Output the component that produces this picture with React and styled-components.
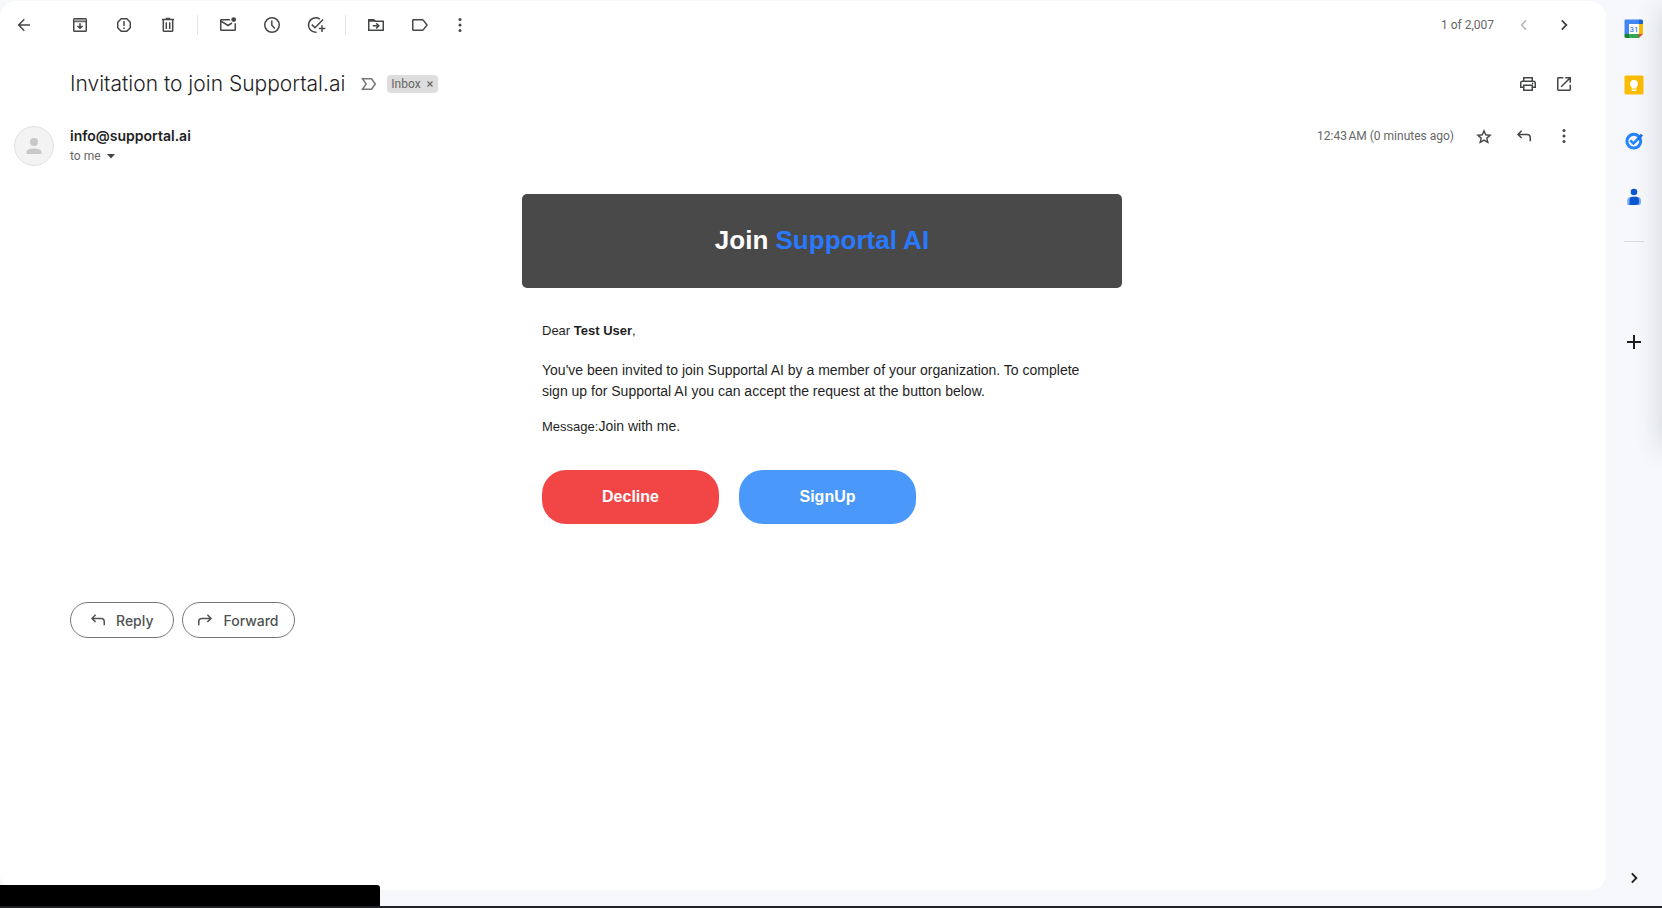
import React, { useState } from 'react'
import styled, { createGlobalStyle } from 'styled-components'

// #region Styles
const GlobalStyle = createGlobalStyle`
  * {
    box-sizing: border-box;
  }

  body {
    margin: 0;
    background-color: #f6f8fc;
    color: #1f1f1f;
    font-family: Roboto, 'Liberation Sans', sans-serif;
  }

  button {
    padding: 0;
    border: none;
    background: none;
    color: inherit;
    font-family: inherit;
    cursor: pointer;
  }
`
const Page = styled.div`
  display: flex;
  min-height: 100vh;
  padding: 1px 0 16px;
  border-bottom: 2px solid #202124;
`
const Main = styled.main`
  flex: 1;
  min-width: 0;
  border-radius: 16px;
  background-color: white;
`
const Toolbar = styled.div`
  display: flex;
  height: 48px;
  padding: 0 32px 0 14px;
  align-items: center;
`
const ToolGroup = styled.div`
  display: flex;
  gap: ${({ $gap }) => $gap || 24}px;
  padding: 0 19px 0 20px;
  border-left: 1px solid ${({ $first }) => ($first ? 'transparent' : '#e3e5e8')};

  > :last-child {
    margin-left: ${({ $last }) => ($last ? '-4px' : 0)};
  }
`
const IconButton = styled.button`
  display: flex;
  flex: none;
  width: 20px;
  height: 20px;
  align-items: center;
  justify-content: center;
  color: ${({ $color }) => $color || '#444746'};

  &:disabled {
    color: #b4b5b5;
    cursor: default;
  }
`
const Glyph = styled.svg`
  display: block;
  flex: none;
  fill: none;
  stroke: currentColor;
  stroke-width: 1.5;
`
const MarkerGlyph = styled(Glyph)`
  color: #777;
`
const BackSlot = styled.div`
  padding-right: 15px;
`
const Pager = styled.div`
  display: flex;
  margin-left: auto;
  align-items: center;
  gap: 20px;
`
const Muted = styled.span`
  color: #666;
  font-size: 12px;
  line-height: 20px;
  white-space: nowrap;
`
const Subject = styled.header`
  display: flex;
  min-height: 36px;
  margin-top: 17px;
  padding: 0 32px 0 70px;
  align-items: center;
`
const Title = styled.h1`
  margin: 0 16px 0 0;
  font-family: Inter, Roboto, sans-serif;
  font-size: 21px;
  font-weight: 300;
  line-height: 28px;
`
const Chip = styled.span`
  display: flex;
  height: 18px;
  margin-left: 10px;
  padding: 0 4px;
  align-items: center;
  gap: 5px;
  border-radius: 4px;
  background-color: #ddd;
  color: #666;
  font-size: 12px;
`
const ChipRemove = styled.button`
  display: flex;
  width: 8px;
  height: 8px;
`
const Actions = styled.div`
  display: flex;
  margin-left: auto;
  align-items: center;
  gap: ${({ $gap }) => $gap}px;
`
const Sender = styled.section`
  display: flex;
  margin-top: 24px;
  padding: 0 32px 0 14px;
  align-items: flex-start;
`
const Avatar = styled.div`
  display: flex;
  width: 40px;
  height: 40px;
  margin-right: 16px;
  align-items: center;
  justify-content: center;
  border: 1px solid #e2e2e2;
  border-radius: 50%;
  background-color: #f3f3f3;
`
const Address = styled.div`
  font-family: Inter, Roboto, sans-serif;
  font-size: 14px;
  font-weight: 600;
  line-height: 20px;
`
const Recipient = styled.button`
  display: flex;
  align-items: center;
  gap: 6px;
`
const LetterWrap = styled.div`
  padding: 0 32px 0 70px;
`
const Letter = styled.article`
  max-width: 600px;
  margin: 28px auto 0;
  font-family: Arial, 'Liberation Sans', sans-serif;
`
const Banner = styled.h2`
  margin: 0;
  padding: 30px 20px 32px;
  border-radius: 5px;
  background-color: #494949;
  color: white;
  font-size: 26px;
  line-height: 32px;
  text-align: center;

  span {
    color: #2979ff;
  }
`
const Body = styled.div`
  padding: 32px 20px 0;
  font-size: 14px;
  line-height: 21px;
`
const Paragraph = styled.p`
  margin: 0 0 ${({ $space }) => $space || 14}px;
`
const Small = styled.span`
  font-size: 13px;
`
const Choices = styled.div`
  display: flex;
  margin-top: 33px;
  gap: 20px;
`
const Choice = styled.button`
  && {
    width: 177px;
    height: 54px;
    border-radius: 24px;
    background-color: ${({ $color }) => $color};
    color: white;
    font-size: 16px;
    font-weight: bold;
  }
`
const Replies = styled.div`
  display: flex;
  margin-top: 78px;
  padding-left: 70px;
  gap: 8px;
`
const Pill = styled.button`
  && {
    display: flex;
    height: 36px;
    padding: 0 ${({ $end }) => $end}px 0 ${({ $start }) => $start}px;
    align-items: center;
    gap: 8px;
    border: 1px solid #747775;
    border-radius: 18px;
    color: #505352;
    font-family: Inter, Roboto, sans-serif;
    font-size: 14px;
    font-weight: 500;
  }
`
const Side = styled.aside`
  display: flex;
  width: 56px;
  padding: 18px 0 2px;
  flex-direction: column;
  align-items: center;
`
const Apps = styled.nav`
  display: flex;
  flex-direction: column;
  gap: 36px;
`
const Rule = styled.hr`
  width: 20px;
  margin: 34px 0 90px;
  border: none;
  border-top: 1px solid #dadce0;
`
const PanelToggle = styled.div`
  margin-top: auto;
`
const EdgeShadow = styled.div`
  position: fixed;
  top: 8px;
  right: -20px;
  width: 20px;
  height: 440px;
  box-shadow: 0 0 28px rgba(60, 64, 67, 0.22);
`
const StatusBubble = styled.div`
  position: fixed;
  bottom: 2px;
  left: 0;
  width: 380px;
  height: 21px;
  border-top-right-radius: 3px;
  background-color: black;
`
// #endregion

const shapes = {
  back: <path d="M16 10H5M10.3 4.3 4.7 10l5.6 5.7" />,
  archive: (
    <>
      <rect x="3.75" y="3.75" width="12.5" height="12.5" rx="0.8" />
      <path d="M4 5h12" stroke="#8a8b8b" />
      <path d="M4 6.7h12" strokeWidth="1" />
      <path d="M10 8.3v4.8M7.5 10.9l2.5 2.4 2.5-2.4" />
    </>
  ),
  spam: (
    <>
      <path d="M7.2 3.75h5.6l3.45 3.45v5.6l-3.45 3.45H7.2L3.75 12.8V7.2z" />
      <path d="M10 6v5M10 12.5V14" />
    </>
  ),
  trash: (
    <path d="M4 4.6h12M7.8 3.6h4.4M5.3 5v10.5q0 .8.8.8h7.8q.8 0 .8-.8V5M8.3 7.3v6.6M11.7 7.3v6.6" />
  ),
  unread: (
    <>
      <path d="M12 4.75H3.3q-.55 0-.55.6v9.3q0 .6.55.6h13.4q.55 0 .55-.6V8.2M3 6.2l7 4.3 4-2.5" />
      <circle cx="15.7" cy="4.6" r="2.4" fill="currentColor" stroke="none" />
    </>
  ),
  snooze: (
    <>
      <circle cx="10" cy="10" r="7.25" />
      <path d="M9.8 5.4v4.9l3.1 3.3" />
    </>
  ),
  task: (
    <path d="M13.8 4.1A7.2 7.2 0 1 0 10.5 17.2M5.8 9.6l3.2 3.1 8.1-8.2M16 10.3v6.6M12.8 13.6h6.5" />
  ),
  move: (
    <>
      <path d="M2.75 15V4.75h5l1.6 1.6h7.9v8.9H2.75zM3 6h5.5" />
      <path d="M6.8 10.8h5.5M10.2 8.2l2.6 2.6-2.6 2.6" />
    </>
  ),
  label: <path d="M3.4 4.75h8.9q.6 0 .95.4L17 10l-3.75 4.85q-.35.4-.95.4H3.4q-.65 0-.65-.65V5.4q0-.65.65-.65z" />,
  more: (
    <g fill="currentColor" stroke="none">
      <circle cx="10" cy="4.6" r="1.5" />
      <circle cx="10" cy="10" r="1.5" />
      <circle cx="10" cy="15.4" r="1.5" />
    </g>
  ),
  prev: <path d="M12.2 5.3 7.6 10l4.6 4.7" />,
  next: <path d="M7.8 5.3l4.6 4.7-4.6 4.7" strokeWidth="1.8" />,
  print: (
    <>
      <path d="M5.75 7V3.75h8.5V7M5.5 13.2H2.75V9q0-1.8 1.8-1.8h10.9q1.8 0 1.8 1.8v4.2H14.5" />
      <path d="M5.75 11.2h8.5v5.05h-8.5z" />
      <circle cx="14.6" cy="9.4" r=".8" fill="currentColor" stroke="none" />
    </>
  ),
  open: <path d="M9.3 3.75H4.4q-.65 0-.65.65v11.2q0 .65.65.65h11.2q.65 0 .65-.65v-4.9M11.3 3.75h4.95v4.9M16 4l-8.8 8.8" />,
  star: (
    <path
      d="m10 4.8 1.7 4 4.4.4-3.3 2.9 1 4.3-3.8-2.3-3.8 2.3 1-4.3-3.3-2.9 4.4-.4z"
      strokeWidth="1.4"
    />
  ),
  reply: <path d="M7.6 4.8 4 8.4 7.6 12M4.2 8.4h8.9q3.15 0 3.15 3.15v3.7" />,
  forward: <path d="M12.4 4.8 16 8.4 12.4 12M15.8 8.4H6.9q-3.15 0-3.15 3.15v3.7" />,
  add: <path d="M10 3v14M3 10h14" strokeWidth="2" />
}

const Icon = ({ name }) => (
  <Glyph width="20" height="20" viewBox="0 0 20 20" aria-hidden="true">
    {shapes[name]}
  </Glyph>
)

const Tool = ({ icon, label, ...rest }) => (
  <IconButton type="button" aria-label={label} title={label} {...rest}>
    <Icon name={icon} />
  </IconButton>
)

const CalendarLogo = () => (
  <svg width="20" height="20" viewBox="0 0 20 20" aria-hidden="true">
    <path d="M1.5.5H15V5H5v10H.5V1.5q0-1 1-1z" fill="#4285f4" />
    <path d="M15 .5h2.5q1.5 0 1.5 1.5v3h-4z" fill="#1967d2" />
    <path d="M15 5h4v10h-4z" fill="#fbbc04" />
    <path d="M5 15h10v4H5z" fill="#34a853" />
    <path d="M.5 15H5v4H2Q.5 19 .5 17.5z" fill="#188038" />
    <path d="M15 15h4l-4 4z" fill="#ea4335" />
    <path d="M5 5h10v10H5z" fill="white" />
    <text x="10" y="13" fill="#4285f4" fontSize="8" fontWeight="500" textAnchor="middle">
      31
    </text>
  </svg>
)

const KeepLogo = () => (
  <svg width="20" height="20" viewBox="0 0 20 20" aria-hidden="true">
    <rect x=".5" y=".5" width="19" height="19" rx="1.5" fill="#fbbc04" />
    <path d="M10 4.7a4.1 4.1 0 0 0-2.5 7.3v1.5h5V12A4.1 4.1 0 0 0 10 4.7zM7.7 14.5h4.6V16H7.7z" fill="white" />
  </svg>
)

const TasksLogo = () => (
  <svg width="20" height="20" viewBox="0 0 20 20" fill="none" aria-hidden="true">
    <circle cx="9.8" cy="10.2" r="6.9" stroke="#2684fc" strokeWidth="3" />
    <path d="m6.2 9.3 3.2 3.2 5-5" stroke="#2684fc" strokeWidth="2.6" />
    <path d="m13 7 3.8-4.2 2.2 1.8-4 4.4z" fill="#1a73e8" />
  </svg>
)

const ContactsLogo = () => (
  <svg width="20" height="20" viewBox="0 0 20 20" aria-hidden="true">
    <circle cx="10" cy="5" r="3.3" fill="#0b57d0" />
    <path d="M3.3 18v-4.3q0-4 4-4h5.2q4.5 0 4.5 4v1.5q0 2.8-3 2.8z" fill="#7baaf7" />
    <path d="M5.5 18v-4.8q0-3.5 3.5-3.5h2.5q3.5 0 3.5 3.5v1.5q0 3.3-3.3 3.3z" fill="#0b57d0" />
  </svg>
)

const apps = [
  { label: 'Calendar', Logo: CalendarLogo },
  { label: 'Keep', Logo: KeepLogo },
  { label: 'Tasks', Logo: TasksLogo },
  { label: 'Contacts', Logo: ContactsLogo }
]

const MailToolbar = () => (
  <Toolbar>
    <BackSlot>
      <Tool icon="back" label="Back to Inbox" />
    </BackSlot>
    <ToolGroup $first>
      <Tool icon="archive" label="Archive" />
      <Tool icon="spam" label="Report spam" />
      <Tool icon="trash" label="Delete" />
    </ToolGroup>
    <ToolGroup>
      <Tool icon="unread" label="Mark as unread" />
      <Tool icon="snooze" label="Snooze" />
      <Tool icon="task" label="Add to Tasks" />
    </ToolGroup>
    <ToolGroup $last>
      <Tool icon="move" label="Move to" />
      <Tool icon="label" label="Labels" />
      <Tool icon="more" label="More" />
    </ToolGroup>
    <Pager>
      <Muted>1 of 2,007</Muted>
      <Tool icon="prev" label="Newer" disabled />
      <Tool icon="next" label="Older" />
    </Pager>
  </Toolbar>
)

const App = () => {
  const [showInbox, setShowInbox] = useState(true)

  return (
    <>
      <GlobalStyle />
      <Page>
        <Main>
          <MailToolbar />

          <Subject>
            <Title>Invitation to join Supportal.ai</Title>
            <MarkerGlyph width="16" height="14" viewBox="0 0 16 14" aria-hidden="true">
              <path d="M1.5 1.75h9L14.3 7l-3.8 5.25h-9L5.2 7z" />
            </MarkerGlyph>
            {showInbox && (
              <Chip>
                Inbox
                <ChipRemove type="button" aria-label="Remove label Inbox" onClick={() => setShowInbox(false)}>
                  <Glyph width="8" height="8" viewBox="0 0 8 8" aria-hidden="true">
                    <path d="m1.5 1.5 5 5M6.5 1.5l-5 5" strokeWidth="1.2" />
                  </Glyph>
                </ChipRemove>
              </Chip>
            )}
            <Actions $gap={16}>
              <Tool icon="print" label="Print all" />
              <Tool icon="open" label="In new window" />
            </Actions>
          </Subject>

          <Sender>
            <Avatar>
              <svg width="16" height="18" viewBox="0 0 16 18" fill="#c8c8c8" aria-hidden="true">
                <circle cx="8" cy="5" r="4" />
                <path d="M.5 17v-2Q.5 11.5 8 11.5t7.5 3.5v2z" />
              </svg>
            </Avatar>
            <div>
              <Address>info@supportal.ai</Address>
              <Recipient type="button" aria-label="Show details">
                <Muted>to me</Muted>
                <svg width="8" height="5" viewBox="0 0 8 5" fill="#444746" aria-hidden="true">
                  <path d="M0 0h8L4 4.5z" />
                </svg>
              </Recipient>
            </div>
            <Actions $gap={20}>
              <Muted>12:43&#8239;AM (0 minutes ago)</Muted>
              <Tool icon="star" label="Not starred" />
              <Tool icon="reply" label="Reply" />
              <Tool icon="more" label="More" />
            </Actions>
          </Sender>

          <LetterWrap>
            <Letter>
              <Banner>
                Join <span>Supportal AI</span>
              </Banner>
              <Body>
                <Paragraph $space={19}>
                  <Small>
                    Dear <b>Test User</b>,
                  </Small>
                </Paragraph>
                <Paragraph>
                  You've been invited to join Supportal AI by a member of your organization. To complete sign up
                  for Supportal AI you can accept the request at the button below.
                </Paragraph>
                <Paragraph>
                  <Small>Message:</Small>Join with me.
                </Paragraph>
                <Choices>
                  <Choice type="button" $color="#f24545">
                    Decline
                  </Choice>
                  <Choice type="button" $color="#4a98f9">
                    SignUp
                  </Choice>
                </Choices>
              </Body>
            </Letter>
          </LetterWrap>

          <Replies>
            <Pill type="button" $start={17} $end={20}>
              <Icon name="reply" />
              Reply
            </Pill>
            <Pill type="button" $start={12} $end={15}>
              <Icon name="forward" />
              Forward
            </Pill>
          </Replies>
        </Main>

        <Side>
          <Apps aria-label="Side panel">
            {apps.map(({ label, Logo }) => (
              <IconButton key={label} type="button" aria-label={label} title={label}>
                <Logo />
              </IconButton>
            ))}
          </Apps>
          <Rule />
          <Tool icon="add" label="Get add-ons" $color="#1f1f1f" />
          <PanelToggle>
            <Tool icon="next" label="Hide side panel" $color="#1f1f1f" />
          </PanelToggle>
        </Side>
      </Page>
      <EdgeShadow />
      <StatusBubble />
    </>
  )
}

export default App
